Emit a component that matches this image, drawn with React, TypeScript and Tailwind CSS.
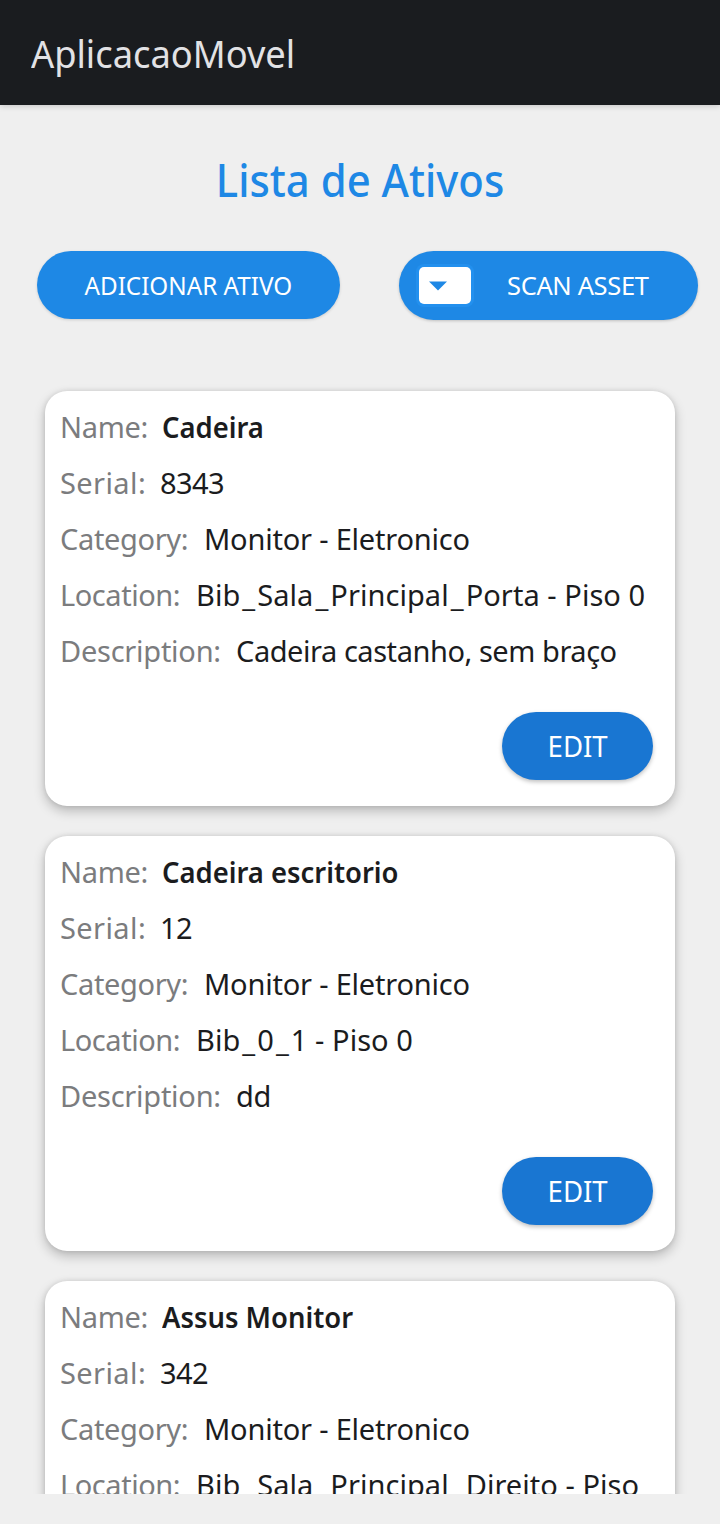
import { Fragment } from "react";

type Asset = {
  name: string;
  serial: string;
  category: string;
  location: string;
  description: string;
};

const assets: Asset[] = [
  {
    name: "Cadeira",
    serial: "8343",
    category: "Monitor - Eletronico",
    location: "Bib_Sala_Principal_Porta - Piso 0",
    description: "Cadeira castanho, sem braço",
  },
  {
    name: "Cadeira escritorio",
    serial: "12",
    category: "Monitor - Eletronico",
    location: "Bib_0_1 - Piso 0",
    description: "dd",
  },
  {
    name: "Assus Monitor",
    serial: "342",
    category: "Monitor - Eletronico",
    location: "Bib_Sala_Principal_Direito - Piso",
    description: "",
  },
];

function Row({ label, value, labelClass, valueClass }: { label: string; value: string; labelClass: string; valueClass: string }) {
  return (
    <div className="flex h-14 items-center whitespace-nowrap leading-[56px]">
      <span className={"shrink-0 text-[#7b7c7e] " + labelClass}>{label}</span>
      <span className={"text-[#1b1c1e] " + valueClass}>
        {value.split("_").map((part, i) => (
          <Fragment key={i}>
            {i > 0 && <span className="mx-[2px]">_</span>}
            {part}
          </Fragment>
        ))}
      </span>
    </div>
  );
}

function AssetCard({ asset }: { asset: Asset }) {
  return (
    <article className="flex h-[415px] shrink-0 flex-col rounded-[22px] bg-white pt-2 pl-[15px] pr-[22px] text-[29px] shadow-[0_5px_12px_rgba(0,0,0,0.23),0_0_5px_rgba(0,0,0,0.1)]">
      <Row label="Name:" value={asset.name} labelClass="w-[102px] tracking-[-0.3px]" valueClass="origin-left scale-x-[0.945] font-semibold" />
      <Row label="Serial:" value={asset.serial} labelClass="w-[100px] tracking-[0.4px]" valueClass="tracking-[-0.6px]" />
      <Row label="Category:" value={asset.category} labelClass="w-[144px] tracking-[-0.35px]" valueClass="tracking-[-0.2px]" />
      <Row label="Location:" value={asset.location} labelClass="w-[136px] tracking-[-0.45px]" valueClass="tracking-[0.05px]" />
      <Row label="Description:" value={asset.description} labelClass="w-[176px] tracking-[-0.25px]" valueClass="tracking-[-0.45px]" />
      <button className="mt-[33px] h-[68px] w-[151px] self-end rounded-full bg-[#1976d2] text-[29px] leading-[68px] text-white shadow-[0_2px_4px_rgba(0,0,0,0.25)]">
        <span className="inline-block scale-x-[0.95]">EDIT</span>
      </button>
    </article>
  );
}

export default function App() {
  return (
    <div className="flex h-[1524px] w-[720px] flex-col overflow-hidden bg-[#efefef] font-['Noto_Sans',sans-serif]">
      <header className="relative flex h-[105px] shrink-0 items-center bg-[#1a1c1f] pl-[31px] pt-[1px] text-[38px] text-[#e2e2e5] shadow-[0_1px_6px_rgba(0,0,0,0.18)]">
        <span className="origin-left scale-x-[0.955]">AplicacaoMovel</span>
      </header>
      <h1 className="mt-[49px] h-[52px] shrink-0 text-center text-[45px] font-medium leading-[52px] text-[#1e88e5]">
        <span className="inline-block scale-x-[0.93]">Lista de Ativos</span>
      </h1>
      <div className="mt-[45px] flex h-[69px] shrink-0 items-start justify-between pl-[37px] pr-[22px] text-[25.5px] text-white">
        <button className="h-[68px] w-[303px] rounded-full bg-[#1e88e5] leading-[68px] shadow-[0_1px_3px_rgba(0,0,0,0.15)]">
          <span className="inline-block scale-x-[0.95]">ADICIONAR ATIVO</span>
        </button>
        <button className="flex h-[69px] w-[299px] items-center rounded-full bg-[#1e88e5] pl-5 shadow-[0_1px_3px_rgba(0,0,0,0.2)]">
          <span className="flex h-[37px] w-[52px] items-center rounded-[5px] bg-white pl-[10px] shadow-[0_0_0_3px_#2390ee]">
            <svg width="18" height="10" viewBox="0 0 18 10">
              <path d="M0 0.5H18L9 9.5Z" fill="#1e88e5" />
            </svg>
          </span>
          <span className="ml-[36px] tracking-[-0.35px]">SCAN ASSET</span>
        </button>
      </div>
      <main className="mt-[41px] flex h-[1133px] shrink-0 flex-col gap-[30px] overflow-hidden px-[45px] pt-[30px]">
        {assets.map((asset) => (
          <AssetCard key={asset.name} asset={asset} />
        ))}
      </main>
    </div>
  );
}
